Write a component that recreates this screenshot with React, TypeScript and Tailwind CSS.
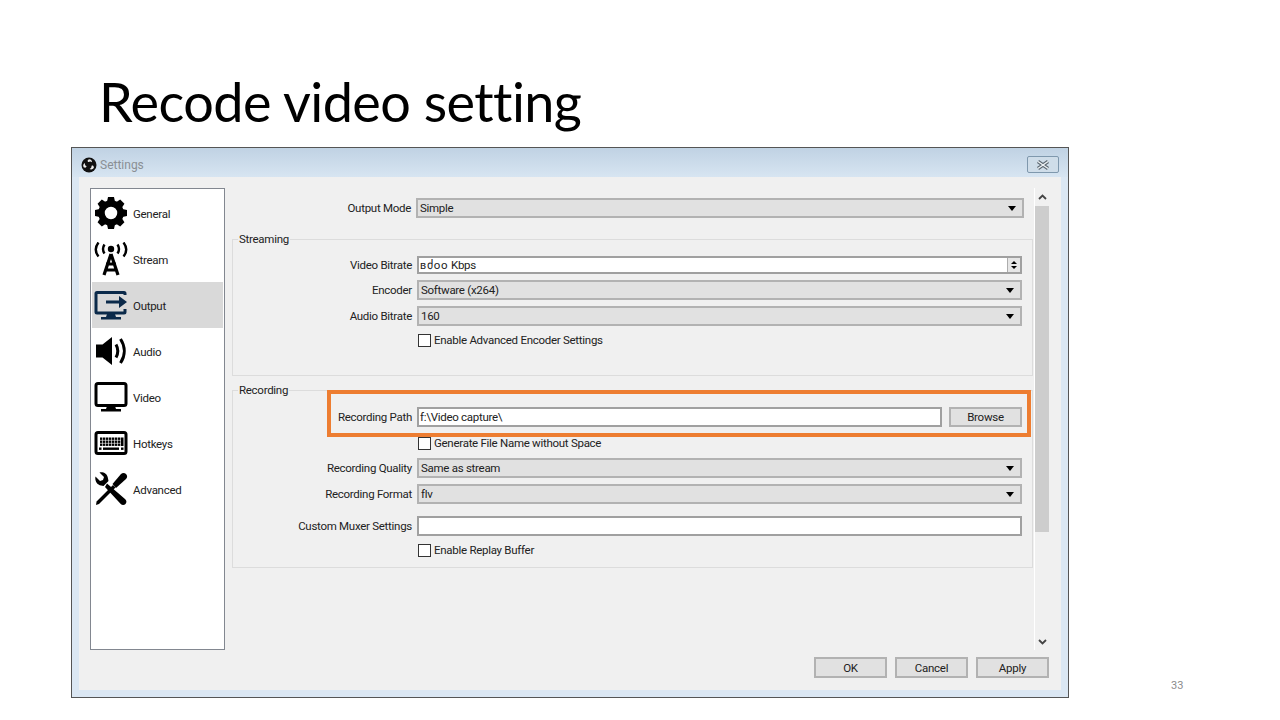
import type { ReactNode } from 'react';

function GearIcon() {
  const teeth = [0, 45, 90, 135, 180, 225, 270, 315];
  return (
    <svg width="34" height="34" viewBox="0 0 34 34">
      <circle cx="17" cy="17" r="9.5" fill="none" stroke="#000" strokeWidth="6.500" />
      {teeth.map((a) => (
        <path key={a} d="M14 1h6l1.500 7h-9z" fill="#000" transform={`rotate(${a} 17 17)`} />
      ))}
    </svg>
  );
}

function StreamIcon() {
  return (
    <svg width="34" height="34" viewBox="0 0 34 34" fill="none" stroke="#000">
      <circle cx="17" cy="7" r="3.200" fill="#000" stroke="none" />
      <path d="M10.500 2.500c-2 3-2 6 0 9M23.500 2.500c2 3 2 6 0 9M4.500 0.500c-3.500 4.500-3.500 9.500 0 14M29.500 0.500c3.500 4.500 3.500 9.500 0 14" strokeWidth="2.400" />
      <path d="M17 12L10 33M17 12l7 21M12 22h10M11.500 28h11" strokeWidth="3.200" />
    </svg>
  );
}

function OutputIcon() {
  return (
    <svg width="34" height="34" viewBox="0 0 34 34" fill="none">
      <path d="M31 7V5.500a1 1 0 0 0-1-1H3a1 1 0 0 0-1 1V24a1 1 0 0 0 1 1h27a1 1 0 0 0 1-1v-3" stroke="#0b2a4a" strokeWidth="3" />
      <path d="M13 26h8l1 3h5v2.500H7V29h5z" fill="#0b2a4a" />
      <path d="M12 12.500h13V8l8 6-8 6v-4.500H12z" fill="#0b2a4a" />
    </svg>
  );
}

function AudioIcon() {
  return (
    <svg width="34" height="34" viewBox="0 0 34 34" fill="none">
      <path d="M2 10.500h6.500L18 3v28l-9.500-7.500H2z" fill="#000" />
      <path d="M22 10.500c2.500 4.500 2.500 8.500 0 13M26.500 5c5 7.500 5 16.500 0 24" stroke="#000" strokeWidth="3" />
    </svg>
  );
}

function VideoIcon() {
  return (
    <svg width="34" height="34" viewBox="0 0 34 34" fill="none">
      <rect x="2" y="3.500" width="30" height="22" rx="2" stroke="#000" strokeWidth="3" />
      <path d="M13 26h8l1 3h5v2.500H7V29h5z" fill="#000" />
    </svg>
  );
}

function HotkeysIcon() {
  const rows = [11.500, 14.500, 17.500];
  const cols = [6, 9, 12, 15, 18, 21, 24];
  return (
    <svg width="34" height="34" viewBox="0 0 34 34" fill="none">
      <rect x="2" y="6.500" width="30" height="21" rx="2" stroke="#000" strokeWidth="3" />
      {rows.map((y) =>
        cols.map((x) => <rect key={`${x}-${y}`} x={x} y={y} width="2.400" height="2.400" fill="#000" />),
      )}
      <rect x="27" y="11.500" width="2.500" height="8.500" fill="#000" />
      <rect x="9" y="21.500" width="16" height="2.400" fill="#000" />
      <rect x="5" y="21.500" width="2.500" height="2.400" fill="#000" />
      <rect x="27" y="21.500" width="2.500" height="2.400" fill="#000" />
    </svg>
  );
}

function AdvancedIcon() {
  return (
    <svg width="34" height="34" viewBox="0 0 34 34" fill="none">
      {/* screwdriver */}
      <path d="M2 33l.6-3.500L19 13l2.500 2.500L5 32z" fill="#000" />
      <path d="M18.500 12L27 2c1.500-1.500 3.500-1.500 5 0s1.500 3.500 0 5l-10 9z" fill="#000" />
      {/* wrench */}
      <path d="M1.500 4.500L6 9l3-1 1-3-4.500-4.500c3.500-.8 8 1 8.500 6l.5 2.500-5 5-2.500-.5C3 13 .5 8.500 1.500 4.500z" fill="#000" />
      <path d="M13 11.500L31 27c1.800 1.800 1.800 3.500.5 5s-3.500 1.500-5-.2L11 15z" fill="#000" />
    </svg>
  );
}

function ObsLogo() {
  return (
    <svg width="16" height="16" viewBox="0 0 16 16">
      <circle cx="8" cy="8" r="7.500" fill="#111" />
      <path d="M8 2.200c2.200 0 3.200 1.500 3 3-1-.9-2.500-1-3.400-.2C6.600 4.800 6 3.300 8 2.200zM2.600 10.200c-.9-2-.2-3.700 1.300-4.300-.2 1.300.4 2.700 1.600 3.200.2 1-.9 2.200-2.900 1.100zM12.900 10.700c-1.200 1.800-3 2.100-4.300 1.200 1.200-.5 2.100-1.700 1.900-3 .8-.7 2.300-.4 2.400 1.800z" fill="#eee" />
    </svg>
  );
}

function Caret() {
  return <span className="w-0 h-0 border-l-[4px] border-r-[4px] border-t-[5px] border-l-transparent border-r-transparent border-t-black mr-[2px]" />;
}

function Row({ label, children, className }: { label: string; children: ReactNode; className?: string }) {
  return (
    <div className={`flex items-center ${className ?? ''}`}>
      <div className="w-[179px] text-right whitespace-nowrap">{label}</div>
      <div className="ml-[5px] flex-1 flex gap-[7px]">{children}</div>
    </div>
  );
}

function Select({ value }: { value: string }) {
  return (
    <div className="flex-1 flex items-center justify-between pl-[2px] pr-[4px] h-[20px] bg-[#e1e1e1] border-2 border-[#b2b2b2]">
      <span>{value}</span>
      <Caret />
    </div>
  );
}

function CheckRow({ label, className }: { label: string; className?: string }) {
  return (
    <div className={`flex items-center pl-[185px] ${className ?? ''}`}>
      <span className="w-[13px] h-[13px] bg-white border border-[#333]" />
      <span className="ml-[3px]">{label}</span>
    </div>
  );
}

const navItems = [
  { label: 'General', icon: <GearIcon />, active: false },
  { label: 'Stream', icon: <StreamIcon />, active: false },
  { label: 'Output', icon: <OutputIcon />, active: true },
  { label: 'Audio', icon: <AudioIcon />, active: false },
  { label: 'Video', icon: <VideoIcon />, active: false },
  { label: 'Hotkeys', icon: <HotkeysIcon />, active: false },
  { label: 'Advanced', icon: <AdvancedIcon />, active: false },
];

export default function App() {
  return (
    <div className="w-[1280px] h-[720px] bg-white overflow-hidden font-['Roboto',sans-serif]">
      {/* Slide title */}
      <h1 className="h-[147px] pl-[99px] pt-[67px] text-[54px] leading-[70px] text-black font-['Lato',sans-serif] tracking-[-0.55px]">
        Recode video setting
      </h1>

      <div className="flex items-end">
        {/* Settings window */}
        <div className="ml-[71px] w-[998px] h-[551px] border border-[#555] flex flex-col bg-[#dbe7f3] text-[11.5px] tracking-[-0.28px] leading-[16px] text-[#222]">
          <div className="h-[29px] shrink-0 flex items-center pt-[4px] pl-[9px] pr-[9px] bg-gradient-to-b from-[#c0d2e3] to-[#d7e5f2]">
            <ObsLogo />
            <span className="ml-[3px] text-[12px] tracking-normal text-[#8a8f94]">Settings</span>
            <div className="ml-auto w-[32px] h-[17px] border border-[#7f98ad] rounded-[2px] flex items-center justify-center bg-[#cfdde9]">
              <svg width="14" height="10" viewBox="0 0 14 10" fill="none">
                <path d="M2 1.500l10 7M12 1.500l-10 7" stroke="#5a6670" strokeWidth="3.500" />
                <path d="M2 1.500l10 7M12 1.500l-10 7" stroke="#eef2f5" strokeWidth="1.500" />
              </svg>
            </div>
          </div>

          <div className="mx-[7px] w-[982px] h-[513px] bg-[#f0f0f0] flex flex-col">
            <div className="flex flex-1 min-h-0 pt-[11px]">
              {/* Sidebar */}
              <div className="ml-[11px] w-[135px] h-[462px] bg-white border border-[#828790] p-[1px] flex flex-col">
                {navItems.map((item) => (
                  <div key={item.label} className={`h-[46px] shrink-0 flex items-center pl-[2px] ${item.active ? 'bg-[#d9d9d9]' : ''}`}>
                    <span className="w-[34px] h-[34px] flex items-center justify-center">{item.icon}</span>
                    <span className="ml-[5px] pt-[1px] text-[#222]">{item.label}</span>
                  </div>
                ))}
              </div>

              {/* Form */}
              <div className="relative ml-[7px] w-[801px]">
                <Row label="Output Mode" className="mt-[10px]">
                  <div className="flex-1 mr-[9px] flex"><Select value="Simple" /></div>
                </Row>

                <fieldset className="mt-[13px] h-[145px] border border-[#dcdcdc]">
                  <legend className="ml-[5px] px-[1px] leading-[16px] text-[#222]">Streaming</legend>
                  <Row label="Video Bitrate" className="mt-[9px]">
                    <div className="flex-1 mr-[10px] h-[18px] flex items-center justify-between bg-white border-2 border-[#a0a0a0] pl-[1px]">
                      <span><span className="tracking-[0.8px]">ʙძoo</span> Kbps</span>
                      <div className="w-[13px] h-full flex flex-col items-center justify-center gap-[2px] bg-[#e6e6e6] border-l border-[#adadad]">
                        <span className="w-0 h-0 border-l-[3px] border-r-[3px] border-b-[3px] border-l-transparent border-r-transparent border-b-black" />
                        <span className="w-0 h-0 border-l-[3px] border-r-[3px] border-t-[3px] border-l-transparent border-r-transparent border-t-black" />
                      </div>
                    </div>
                  </Row>
                  <Row label="Encoder" className="mt-[6px]">
                    <div className="flex-1 mr-[10px] flex"><Select value="Software (x264)" /></div>
                  </Row>
                  <Row label="Audio Bitrate" className="mt-[6px]">
                    <div className="flex-1 mr-[10px] flex"><Select value="160" /></div>
                  </Row>
                  <CheckRow label="Enable Advanced Encoder Settings" className="mt-[6px]" />
                </fieldset>

                <fieldset className="mt-[6px] h-[186px] border border-[#dcdcdc]">
                  <legend className="ml-[5px] px-[1px] leading-[16px] text-[#222]">Recording</legend>
                  <Row label="Recording Path" className="mt-[9px]">
                    <div className="flex-1 mr-[10px] flex gap-[7px]">
                      <div className="flex-1 h-[20px] flex items-center bg-white border-2 border-[#a0a0a0] pl-[1px]">f:\Video capture\</div>
                      <div className="w-[73px] h-[20px] flex items-center justify-center bg-[#e1e1e1] border-2 border-[#b2b2b2]">Browse</div>
                    </div>
                  </Row>
                  <CheckRow label="Generate File Name without Space" className="mt-[8px]" />
                  <Row label="Recording Quality" className="mt-[7px]">
                    <div className="flex-1 mr-[10px] flex"><Select value="Same as stream" /></div>
                  </Row>
                  <Row label="Recording Format" className="mt-[6px]">
                    <div className="flex-1 mr-[10px] flex"><Select value="flv" /></div>
                  </Row>
                  <Row label="Custom Muxer Settings" className="mt-[12px]">
                    <div className="flex-1 mr-[10px] h-[20px] bg-white border-2 border-[#a0a0a0]" />
                  </Row>
                  <CheckRow label="Enable Replay Buffer" className="mt-[6px]" />
                </fieldset>

                {/* Orange highlight around the path row */}
                <div className="absolute left-[95px] top-[202px] w-[704px] h-[47px] border-4 border-[#ed7d31]" />
              </div>

              {/* Scrollbar */}
              <div className="ml-[1px] w-[15px] h-[462px] flex flex-col bg-[#f0f0f0] border-l border-white">
                <div className="h-[18px] flex items-center justify-center">
                  <svg width="9" height="6" viewBox="0 0 9 6" fill="none"><path d="M1 5l3.500-3.500L8 5" stroke="#444" strokeWidth="1.800" /></svg>
                </div>
                <div className="h-[326px] bg-[#cdcdcd]" />
                <div className="flex-1 flex items-end justify-center pb-[5px]">
                  <svg width="9" height="6" viewBox="0 0 9 6" fill="none"><path d="M1 1l3.500 3.500L8 1" stroke="#444" strokeWidth="1.800" /></svg>
                </div>
              </div>
            </div>

            {/* Dialog buttons */}
            <div className="h-[40px] shrink-0 flex justify-end gap-[8px] pr-[12px] pt-[7px]">
              {['OK', 'Cancel', 'Apply'].map((b) => (
                <div key={b} className="w-[73px] h-[21px] flex items-center justify-center bg-[#e1e1e1] border-2 border-[#b2b2b2]">{b}</div>
              ))}
            </div>
          </div>
        </div>

        {/* Page number */}
        <div className="ml-[102px] mb-[5px] text-[11px] leading-[14px] text-[#8c8c8c]">33</div>
      </div>
    </div>
  );
}
